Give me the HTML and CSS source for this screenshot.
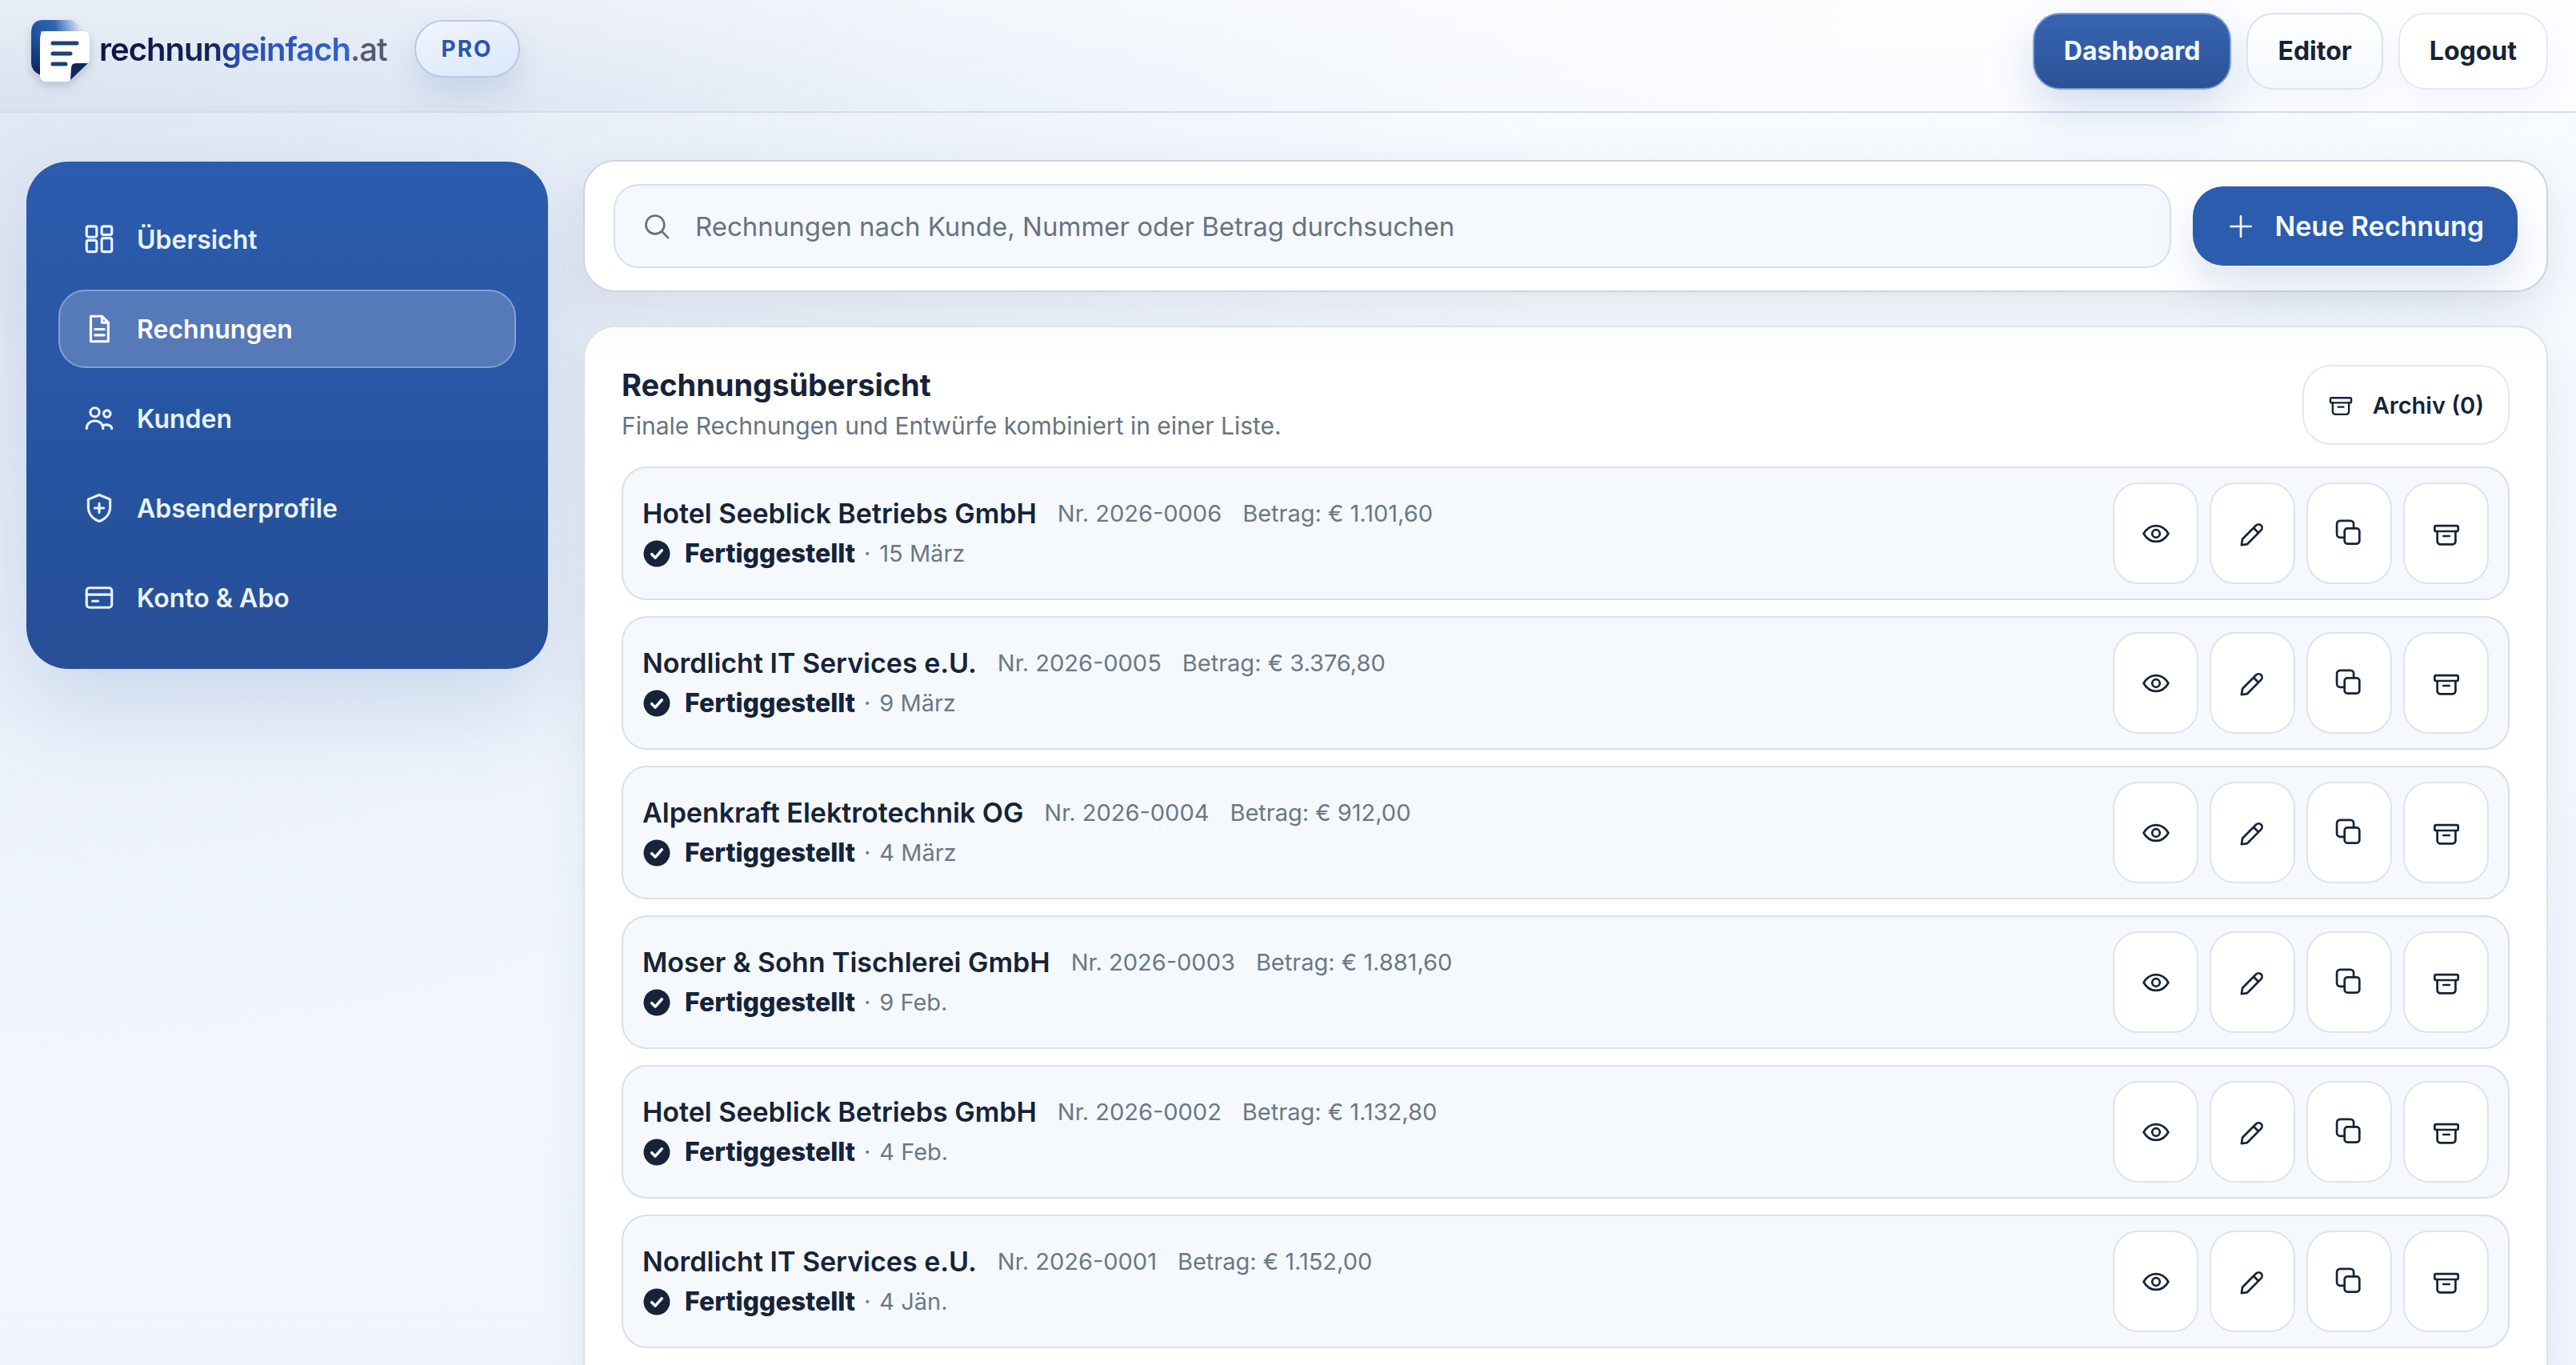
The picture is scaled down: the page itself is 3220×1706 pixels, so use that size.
FILE: index.html
```
<!DOCTYPE html>
<html lang="de">
<head>
    <meta charset="UTF-8">
    <meta name="viewport" content="width=device-width, initial-scale=1.0">
    <title>Rechnungen</title>
    <link rel="stylesheet" href="styles.css">
</head>
<body>
    <!-- Icons, einmal definiert -->
    <svg class="sprite" aria-hidden="true">
        <symbol id="i-grid" viewBox="0 0 24 24">
            <rect x="3" y="2.8" width="7.2" height="7.6" rx="1.4"/>
            <rect x="13.8" y="2.8" width="7.2" height="6" rx="1.4"/>
            <rect x="3" y="12.8" width="7.2" height="8.1" rx="1.4"/>
            <rect x="13.8" y="11.2" width="7.2" height="9.7" rx="1.4"/>
        </symbol>
        <symbol id="i-file" viewBox="0 0 24 24">
            <path d="M6 3h8l4.5 4.5V21H6z"/>
            <path d="M14 3v4.5h4.5M9 12.3h6.5M9 16.5h6.5"/>
        </symbol>
        <symbol id="i-users" viewBox="0 0 24 24">
            <circle cx="8.9" cy="7.6" r="3.2"/>
            <circle cx="17.6" cy="8.6" r="2.4"/>
            <path d="M3 19.2c0-3.3 2.6-5.5 5.9-5.5s5.9 2.2 5.9 5.5M15.2 16.8c3-.9 5.6.3 5.8 2.4"/>
        </symbol>
        <symbol id="i-shield" viewBox="0 0 24 24">
            <path d="M12 2.6 4.2 5.8v5.4c0 5 3.2 8.6 7.8 10.2 4.6-1.6 7.8-5.2 7.8-10.2V5.8zM12 8.8v6.4M8.8 12h6.4"/>
        </symbol>
        <symbol id="i-card" viewBox="0 0 24 24">
            <rect x="3" y="5" width="18" height="14" rx="2"/>
            <path d="M3 9.8h18M7.2 14.4h4"/>
        </symbol>
        <symbol id="i-search" viewBox="0 0 24 24">
            <circle cx="10.6" cy="10.6" r="7.6"/>
            <path d="m16.2 16.2 5.2 5.2"/>
        </symbol>
        <symbol id="i-plus" viewBox="0 0 24 24">
            <path d="M12 3.5v17M3.5 12h17"/>
        </symbol>
        <symbol id="i-archive" viewBox="0 0 24 24">
            <rect x="2.2" y="5.4" width="19.6" height="4.6" rx="1.2"/>
            <path d="M4.4 10v8.4a2.5 2.5 0 0 0 2.5 2.5h10.2a2.5 2.5 0 0 0 2.5-2.5V10M9.5 14h5"/>
        </symbol>
        <symbol id="i-eye" viewBox="0 0 24 24">
            <path d="M1.7 12c2.5-4.3 6-6.6 10.3-6.6s7.8 2.3 10.3 6.6c-2.5 4.3-6 6.6-10.3 6.6S4.2 16.3 1.7 12z"/>
            <circle cx="12" cy="12" r="3.2"/>
        </symbol>
        <symbol id="i-pencil" viewBox="0 0 24 24">
            <path d="M2.6 21.5l.8-5L14.8 5a2.9 2.9 0 0 1 4.1 4.1L7.4 20.7zM12.6 7.2l4.1 4.1"/>
        </symbol>
        <symbol id="i-copy" viewBox="0 0 24 24">
            <rect x="7.8" y="7.6" width="12.4" height="12.8" rx="2.4"/>
            <path d="M7.8 15.2H4.1a2.7 2.7 0 0 1-2.7-2.7V3.9a2.7 2.7 0 0 1 2.7-2.7h8.6a2.7 2.7 0 0 1 2.7 2.7v3.7"/>
        </symbol>
        <symbol id="i-check" viewBox="0 0 24 24">
            <circle class="disc" cx="12" cy="12" r="11"/>
            <path class="tick" d="m7.8 12.5 2.9 2.9 5.5-6.2"/>
        </symbol>
    </svg>

    <header class="header">
        <a class="logo" href="#">
            <svg class="logo-mark" viewBox="0 0 80 90" aria-hidden="true">
                <defs>
                    <linearGradient id="lg-back" x1="0" y1="0.3" x2="1" y2="0">
                        <stop offset="0" stop-color="#1d4f9c"/>
                        <stop offset="0.5" stop-color="#2f66b0"/>
                        <stop offset="1" stop-color="#dfe9f6"/>
                    </linearGradient>
                    <linearGradient id="lg-side" x1="0" y1="0" x2="0" y2="1">
                        <stop offset="0.3" stop-color="#12286a" stop-opacity="0"/>
                        <stop offset="1" stop-color="#10205a"/>
                    </linearGradient>
                </defs>
                <path d="M18 5h32q12 0 13 14H15v55Q3 69 3 58V21Q3 5 18 5z" fill="url(#lg-back)"/>
                <path d="M18 5q-15 0-15 16v37q0 11 12 16z" fill="url(#lg-side)"/>
                <path d="M23 19h44q9 0 9 9v26q0 3-3 6L52 80q-2 2-6 2H21q-7 0-7-7V28q0-9 9-9z" fill="#fff"/>
                <path d="M52 80l1-15q0-6 6-6h15z" fill="#10265c"/>
                <path d="M30 34h30M30 47h22M30 60h16" stroke="#1d4272" stroke-width="5" stroke-linecap="round"/>
            </svg>
            <span class="logo-text"><span class="name">rechnungeinfach</span><span class="tld">.at</span></span>
        </a>
        <span class="badge">PRO</span>
        <nav class="top-nav">
            <a class="pill active" href="#">Dashboard</a>
            <a class="pill" href="#">Editor</a>
            <button class="pill" type="button">Logout</button>
        </nav>
    </header>

    <div class="layout">
        <nav class="sidebar">
            <a href="#"><svg class="icon"><use href="#i-grid"/></svg>Übersicht</a>
            <a class="active" href="#"><svg class="icon"><use href="#i-file"/></svg>Rechnungen</a>
            <a href="#"><svg class="icon"><use href="#i-users"/></svg>Kunden</a>
            <a href="#"><svg class="icon"><use href="#i-shield"/></svg>Absenderprofile</a>
            <a href="#"><svg class="icon"><use href="#i-card"/></svg>Konto &amp; Abo</a>
        </nav>

        <main class="content">
            <div class="toolbar">
                <label class="search">
                    <svg class="icon"><use href="#i-search"/></svg>
                    <input type="search" placeholder="Rechnungen nach Kunde, Nummer oder Betrag durchsuchen" aria-label="Rechnungen durchsuchen">
                </label>
                <button class="new-button" type="button"><svg class="icon"><use href="#i-plus"/></svg>Neue Rechnung</button>
            </div>

            <section class="panel">
                <div class="panel-head">
                    <div>
                        <h1>Rechnungsübersicht</h1>
                        <p>Finale Rechnungen und Entwürfe kombiniert in einer Liste.</p>
                    </div>
                    <button class="archive-button" type="button"><svg class="icon"><use href="#i-archive"/></svg>Archiv (0)</button>
                </div>
                <ul class="invoices" id="invoices"></ul>
            </section>
        </main>
    </div>

    <script src="script.js"></script>
</body>
</html>
```
FILE: styles.css
```
* {
    box-sizing: border-box;
}

html {
    height: 100%;
    overflow: hidden;
}

body {
    margin: 0;
    min-height: 100%;
    font-family: Inter, "Liberation Sans", sans-serif;
    font-size: 32px;
    color: #162338;
    background:
        radial-gradient(ellipse 60% 1200px at 0 200px, #e0e8f4, #e0e8f400),
        linear-gradient(180deg, #f8fbff, #f1f6fe);
}

a {
    color: inherit;
    text-decoration: none;
}

button {
    font: inherit;
    color: inherit;
    cursor: pointer;
}

.sprite {
    position: absolute;
    width: 0;
    height: 0;
}

.icon {
    flex: none;
    width: 36px;
    height: 36px;
    fill: none;
    stroke: currentColor;
    stroke-width: 1.8;
    stroke-linecap: round;
    stroke-linejoin: round;
}

/* Kopfzeile */
.header {
    display: flex;
    align-items: flex-start;
    height: 141px;
    padding: 16px 35px 0 36px;
    border-bottom: 2px solid #d3deec;
    background:
        linear-gradient(#ffffff66, #ffffff00),
        linear-gradient(90deg, #d8e3f0, #dfe6f3 20%, #ecf2fa 38%, #f7fafe 60%, #fcfdff 80%);
}

.logo {
    display: flex;
    align-items: flex-start;
    gap: 8px;
    margin-top: 4px;
}

.logo-mark {
    width: 80px;
    height: 90px;
    filter: drop-shadow(0 6px 6px #4a5a7a40);
}

.logo-text {
    font-size: 40px;
    font-weight: 600;
    letter-spacing: -1px;
    line-height: 84px;
}

.logo-text .name {
    background: linear-gradient(90deg, #0d143f, #16215a 45%, #284fae 55%, #3362cb);
    background-clip: text;
    color: transparent;
}

.logo-text .tld {
    color: #515a70;
    font-weight: 500;
}

.badge {
    margin: 9px 0 0 34px;
    padding: 0 32px;
    border: 2px solid #b9c9e2;
    border-radius: 36px;
    background: linear-gradient(160deg, #f1f6fd, #d9e6fa);
    box-shadow: 0 20px 40px #2b5cad26;
    color: #2b57a4;
    font-size: 28px;
    font-weight: 700;
    letter-spacing: 2px;
    line-height: 68px;
}

.top-nav {
    display: flex;
    gap: 19px;
    margin-left: auto;
}

.pill {
    padding: 0 37px;
    border: 2px solid #dbe3ee;
    border-radius: 34px;
    background: linear-gradient(#fff, #f4f8fe);
    box-shadow: 0 16px 40px #2b5cad0d;
    font-weight: 700;
    line-height: 92px;
}

button.pill {
    background: #fff;
    border-color: #e6eaf0;
}

.pill.active {
    border-color: #7c9dd1;
    background: linear-gradient(#3764b1, #2b5297);
    box-shadow: 0 24px 60px #2b5cad33;
    color: #f2f8ff;
}

.layout {
    display: grid;
    grid-template-columns: 652px 1fr;
    align-items: start;
    gap: 44px;
    padding: 59px 35px 0 33px;
}

/* Seitenleiste */
.sidebar {
    display: flex;
    flex-direction: column;
    gap: 14px;
    margin-top: 2px;
    padding: 48px 40px 40px;
    border-radius: 52px;
    background: linear-gradient(#2b5cad, #2a57a6 40%, #26539f 65%, #284f97);
    box-shadow: 0 44px 120px #2b5cad2e;
    color: #e8f3ff;
}

.sidebar a {
    display: flex;
    align-items: center;
    gap: 26px;
    height: 98px;
    padding: 0 28px;
    border: 2px solid transparent;
    border-radius: 34px;
    font-weight: 600;
}

.sidebar a.active {
    border-color: #86a1d2;
    background: #5679b7;
    color: #fff;
}

.sidebar .icon {
    width: 42px;
    height: 42px;
}

.content {
    display: grid;
    gap: 42px;
    min-width: 0;
}

/* Suche und neue Rechnung */
.toolbar {
    display: flex;
    align-items: center;
    gap: 27px;
    padding: 28px 36px;
    border: 2px solid #ccd5e0;
    border-radius: 40px;
    background: #fff;
    box-shadow: 0 20px 60px #1e325a1a;
}

.search {
    display: flex;
    flex: 1;
    align-items: center;
    gap: 30px;
    height: 105px;
    padding: 0 34px;
    border: 2px solid #dae1e9;
    border-radius: 32px;
    background: #f5f9fe;
    color: #63717f;
}

.search input {
    flex: 1;
    padding: 0;
    border: 0;
    outline: 0;
    background: none;
    font: inherit;
    font-size: 33px;
}

.search input::placeholder {
    color: #667483;
    opacity: 1;
}

.new-button {
    display: flex;
    align-items: center;
    gap: 24px;
    height: 99px;
    padding: 0 42px;
    border: 0;
    border-radius: 38px;
    background: #2b5cad;
    box-shadow: 0 24px 56px #2b5cad2e;
    color: #f4f9ff;
    font-size: 34px;
    font-weight: 600;
}

/* Liste */
.panel {
    padding: 46px 46px 60px;
    border: 2px solid #dde2e9;
    border-radius: 40px;
    background: linear-gradient(#fafbfc, #fff 48px);
    box-shadow: 0 20px 60px #1e325a14;
}

.panel-head {
    display: flex;
    align-items: center;
    justify-content: space-between;
    margin-bottom: 26px;
}

.panel h1 {
    margin: 0;
    font-size: 38px;
    font-weight: 700;
    line-height: 52px;
}

.panel p {
    margin: 0;
    color: #667483;
    font-size: 30px;
    line-height: 50px;
}

.archive-button {
    display: flex;
    align-items: center;
    gap: 24px;
    height: 100px;
    padding: 0 30px;
    border: 2px solid #e5e8ec;
    border-radius: 36px;
    background: #fff;
    font-size: 29px;
    font-weight: 600;
}

.archive-button .icon {
    width: 32px;
    height: 32px;
}

.invoices {
    display: grid;
    gap: 20px;
    margin: 0;
    padding: 0;
    list-style: none;
}

.invoice {
    display: flex;
    align-items: center;
    justify-content: space-between;
    padding: 18px 24px;
    border: 2px solid #dae0e6;
    border-radius: 32px;
    background: #f5f9fe;
}

.invoice .line {
    display: flex;
    align-items: center;
    gap: 26px;
    height: 50px;
    color: #6b7886;
    font-size: 29px;
}

.invoice h2 {
    margin: 0;
    color: #162338;
    font-size: 34px;
    font-weight: 600;
}

.invoice .status {
    gap: 11px;
}

.invoice .status strong {
    margin-left: 6px;
    color: #162338;
    font-size: 32px;
    font-weight: 800;
}

.disc {
    fill: #162338;
    stroke: none;
}

.tick {
    stroke: #f5f9fe;
    stroke-width: 2.4;
}

.actions {
    display: flex;
    gap: 14px;
}

.actions button {
    display: grid;
    place-items: center;
    width: 107px;
    height: 127px;
    padding: 0;
    border: 2px solid #dfe4e9;
    border-radius: 32px;
    background: #fff;
}
```
FILE: script.js
```
const invoices = [
    { customer: 'Hotel Seeblick Betriebs GmbH', number: '2026-0006', amount: '1.101,60', date: '15 März' },
    { customer: 'Nordlicht IT Services e.U.', number: '2026-0005', amount: '3.376,80', date: '9 März' },
    { customer: 'Alpenkraft Elektrotechnik OG', number: '2026-0004', amount: '912,00', date: '4 März' },
    { customer: 'Moser & Sohn Tischlerei GmbH', number: '2026-0003', amount: '1.881,60', date: '9 Feb.' },
    { customer: 'Hotel Seeblick Betriebs GmbH', number: '2026-0002', amount: '1.132,80', date: '4 Feb.' },
    { customer: 'Nordlicht IT Services e.U.', number: '2026-0001', amount: '1.152,00', date: '4 Jän.' }
];

const actions = [
    ['eye', 'Ansehen'],
    ['pencil', 'Bearbeiten'],
    ['copy', 'Duplizieren'],
    ['archive', 'Archivieren']
];

document.getElementById('invoices').innerHTML = invoices.map(inv => `
    <li class="invoice">
        <div>
            <div class="line">
                <h2>${inv.customer.replace('&', '&amp;')}</h2>
                <span>Nr. ${inv.number}</span>
                <span>Betrag: € ${inv.amount}</span>
            </div>
            <div class="line status">
                <svg class="icon"><use href="#i-check"/></svg>
                <strong>Fertiggestellt</strong>
                <span>·</span>
                <span>${inv.date}</span>
            </div>
        </div>
        <div class="actions">
            ${actions.map(([icon, label]) => `<button type="button" aria-label="${label}"><svg class="icon"><use href="#i-${icon}"/></svg></button>`).join('')}
        </div>
    </li>`).join('');
```
